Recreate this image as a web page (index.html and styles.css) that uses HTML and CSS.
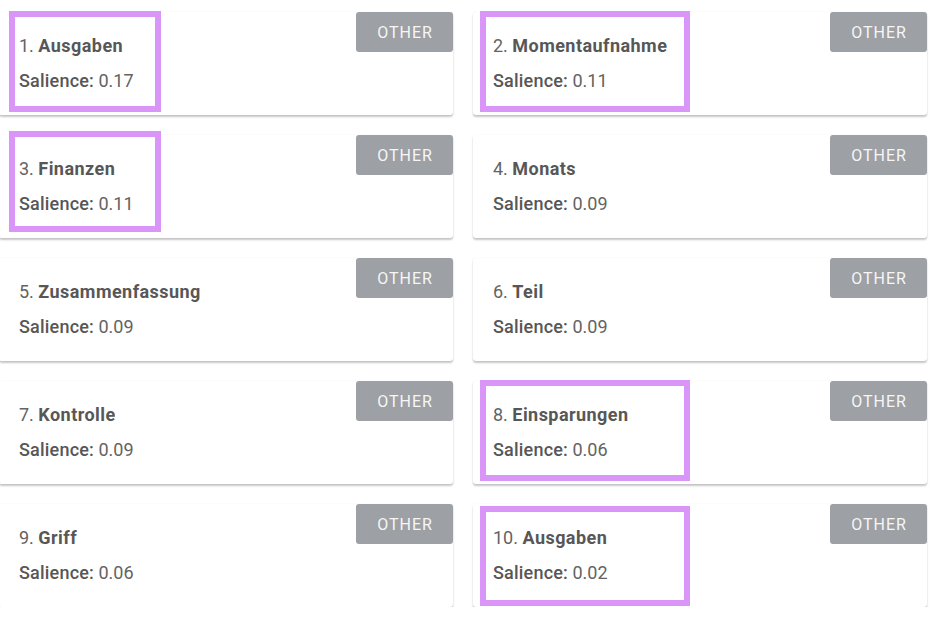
FILE: index.html
```html
<!DOCTYPE html>
<html>
<head>
<meta charset="utf-8">
<link rel="stylesheet" href="styles.css">
</head>
<body>
<div class="grid">
  <div class="card left"><div class="info"><div class="name">1. <b>Ausgaben</b></div><div class="sal"><b>Salience:</b> 0.17</div></div><span class="tag">OTHER</span><span class="mark"></span></div>
  <div class="card right"><div class="info"><div class="name">2. <b>Momentaufnahme</b></div><div class="sal"><b>Salience:</b> 0.11</div></div><span class="tag">OTHER</span><span class="mark"></span></div>
  <div class="card left"><div class="info"><div class="name">3. <b>Finanzen</b></div><div class="sal"><b>Salience:</b> 0.11</div></div><span class="tag">OTHER</span><span class="mark up"></span></div>
  <div class="card right"><div class="info"><div class="name">4. <b>Monats</b></div><div class="sal"><b>Salience:</b> 0.09</div></div><span class="tag">OTHER</span></div>
  <div class="card left"><div class="info"><div class="name">5. <b>Zusammenfassung</b></div><div class="sal"><b>Salience:</b> 0.09</div></div><span class="tag">OTHER</span></div>
  <div class="card right"><div class="info"><div class="name">6. <b>Teil</b></div><div class="sal"><b>Salience:</b> 0.09</div></div><span class="tag">OTHER</span></div>
  <div class="card left"><div class="info"><div class="name">7. <b>Kontrolle</b></div><div class="sal"><b>Salience:</b> 0.09</div></div><span class="tag">OTHER</span></div>
  <div class="card right"><div class="info"><div class="name">8. <b>Einsparungen</b></div><div class="sal"><b>Salience:</b> 0.06</div></div><span class="tag">OTHER</span><span class="mark"></span></div>
  <div class="card left"><div class="info"><div class="name">9. <b>Griff</b></div><div class="sal"><b>Salience:</b> 0.06</div></div><span class="tag">OTHER</span></div>
  <div class="card right"><div class="info"><div class="name">10. <b>Ausgaben</b></div><div class="sal"><b>Salience:</b> 0.02</div></div><span class="tag">OTHER</span><span class="mark down"></span></div>
</div>
</body>
</html>
```
FILE: styles.css
```css
html, body {
  margin: 0;
  padding: 0;
  background: #ffffff;
}
body {
  font-family: Roboto, "Liberation Sans", sans-serif;
  color: #636363;
}
.grid {
  display: grid;
  grid-template-columns: 454px 454px;
  column-gap: 20px;
  row-gap: 20px;
  padding-top: 12px;
  margin-left: -1px;
}
.card {
  position: relative;
  height: 103px;
  box-sizing: border-box;
  background: #fff;
  border-radius: 3px;
  box-shadow: 0 2px 2px rgba(0,0,0,0.22), 0 0 2px rgba(0,0,0,0.06);
  display: flex;
  justify-content: space-between;
  align-items: flex-start;
  padding: 16px 0 0 20px;
}
.info {
  font-size: 18px;
  line-height: 35px;
}
.info b {
  color: #575757;
}
.name b {
  font-weight: 700;
  letter-spacing: 0.45px;
}
.sal b {
  font-weight: 500;
  letter-spacing: 0.2px;
}
.tag {
  margin-top: -16px;
  width: 97px;
  height: 40px;
  background: #9da0a4;
  color: #f6f6f6;
  border-radius: 3px;
  font-size: 16px;
  letter-spacing: 1px;
  display: flex;
  align-items: center;
  justify-content: center;
  padding-left: 1px;
  box-sizing: border-box;
}
.mark {
  position: absolute;
  top: -1px;
  height: 101px;
  box-sizing: border-box;
  border: 6px solid #d995f7;
  pointer-events: none;
}
.left .mark {
  left: 10px;
  width: 152px;
}
.right .mark {
  left: 7px;
  width: 210px;
}
.mark.up {
  top: -4px;
}
.mark.down {
  top: 2px;
  height: 100px;
}
```
